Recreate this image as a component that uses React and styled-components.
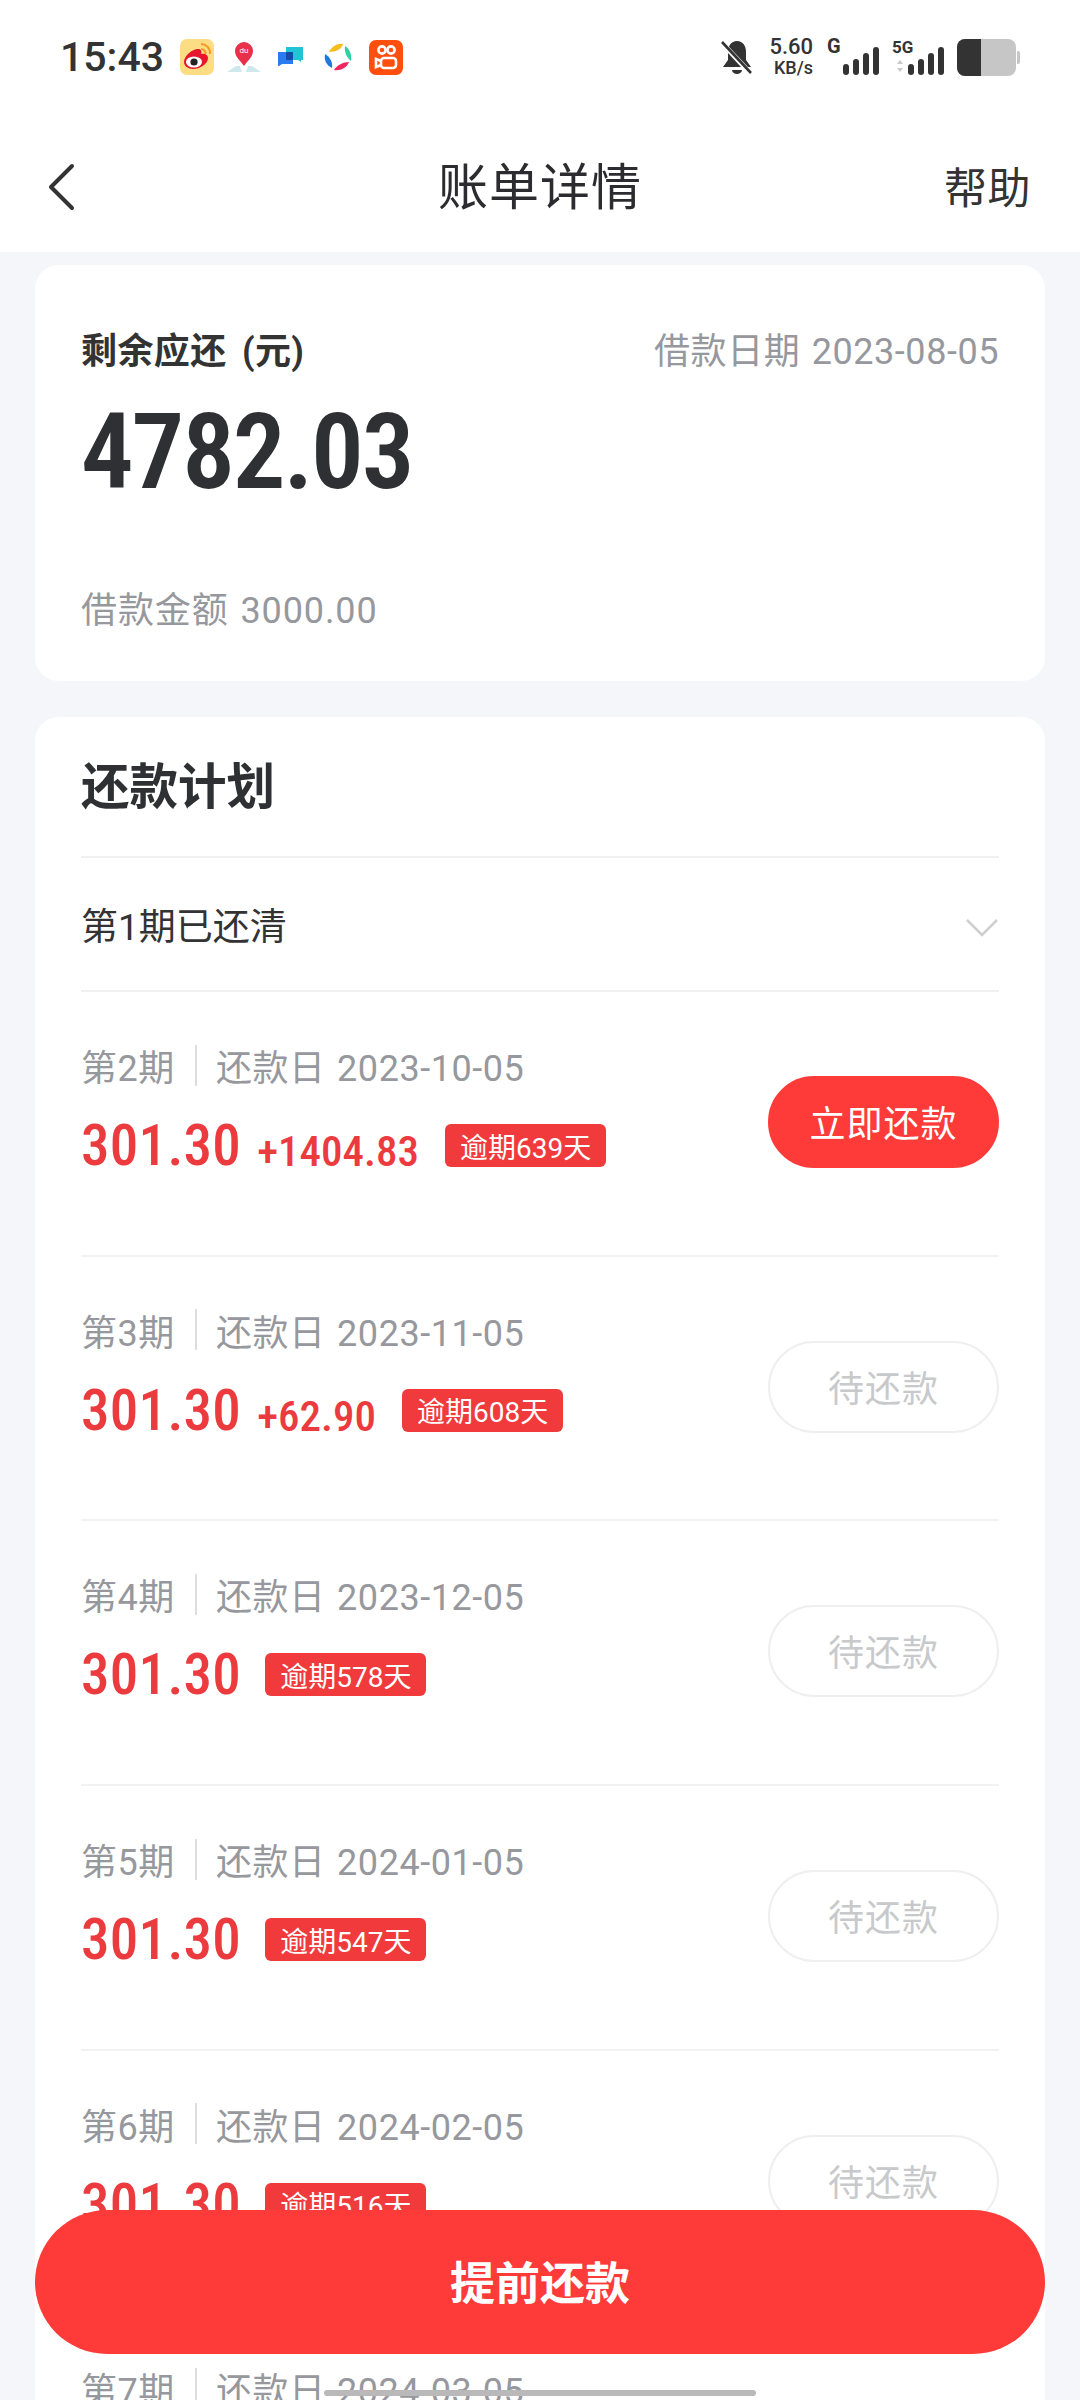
import React from "react";
import styled, { createGlobalStyle } from "styled-components";

const CJK = '"Noto Sans CJK SC", "Noto Sans", sans-serif';
const NUM = 'Roboto, "Noto Sans CJK SC", sans-serif';

const Global = createGlobalStyle`
  html, body { margin: 0; padding: 0; background: #f5f6fa; }
  * { box-sizing: border-box; }
`;

const Page = styled.div`
  position: relative;
  width: 1080px;
  height: 2400px;
  overflow: hidden;
  background: #f5f6fa;
  font-family: ${CJK};
`;

const Header = styled.header`
  background: #fff;
  height: 252px;
  display: flex;
  flex-direction: column;
`;

const StatusBar = styled.div`
  height: 114px;
  padding: 36px 60px 0 60px;
  display: flex;
  justify-content: space-between;
  align-items: flex-start;
`;

const StatusGroup = styled.div`
  display: flex;
  align-items: center;
  height: 42px;
`;

const Time = styled.span`
  font-family: Roboto, sans-serif;
  font-size: 41px;
  font-weight: 500;
  color: #333;
  line-height: 42px;
`;

const IconSlot = styled.span`
  display: inline-flex;
  margin-left: ${(p) => p.$ml}px;
`;

const Speed = styled.div`
  display: flex;
  flex-direction: column;
  align-items: flex-end;
  width: 46px;
  margin: 0 14px;
  font-family: Roboto, sans-serif;
  font-weight: 500;
  color: #333;
  line-height: 21px;
  white-space: nowrap;
`;
const SpeedTop = styled.span`font-size: 22px;`;
const SpeedBottom = styled.span`font-size: 18px;`;

const Nav = styled.nav`
  flex: 1;
  position: relative;
  display: flex;
  align-items: center;
  justify-content: center;
`;

const Back = styled.svg`
  position: absolute;
  left: 45px;
  top: 48px;
`;

const Title = styled.h1`
  margin: 0;
  font-size: 50px;
  font-weight: 400;
  color: #2c2c30;
  line-height: 60px;
  letter-spacing: 1px;
`;

const Help = styled.span`
  position: absolute;
  right: 49px;
  top: 45px;
  font-size: 43px;
  color: #333;
  line-height: 52px;
  letter-spacing: 0.5px;
`;

const Content = styled.main`
  padding: 13px 35px 0;
  display: flex;
  flex-direction: column;
  gap: 36px;
`;

const Card = styled.section`
  background: #fff;
  border-radius: 24px;
  padding: 0 46px;
`;

const SummaryCard = styled(Card)`
  height: 416px;
  padding-top: 57px;
`;

const SummaryTop = styled.div`
  display: flex;
  justify-content: space-between;
  align-items: center;
  height: 52px;
`;

const SummaryLabel = styled.span`
  font-size: 36px;
  font-weight: 700;
  color: #333;
  font-family: ${NUM};
  word-spacing: 6px;
  letter-spacing: 0.4px;
`;

const Muted = styled.span`
  font-family: ${NUM};
  font-size: 36px;
  color: #96989d;
  letter-spacing: 0.55px;
  word-spacing: 2px;
`;

const BigAmount = styled.div`
  font-family: Roboto, sans-serif;
  font-stretch: 75%;
  font-size: 105px;
  font-weight: 600;
  color: #2f3033;
  line-height: 100px;
  margin-top: 29px;
  letter-spacing: -2.2px;
`;

const LoanAmount = styled(Muted)`
  display: block;
  margin-top: 83px;
  line-height: 50px;
  letter-spacing: 0.9px;
`;

const PlanTitleRow = styled.div`
  height: 141px;
  display: flex;
  align-items: center;
  padding-bottom: 8px;
  border-bottom: 2px solid #f0f0f2;
`;

const PlanTitle = styled.h2`
  margin: 0;
  font-size: 48.5px;
  font-weight: 700;
  color: #2f3033;
`;

const PaidRow = styled.div`
  height: 134px;
  display: flex;
  align-items: center;
  justify-content: space-between;
  border-bottom: 2px solid #f0f0f2;
`;

const PaidText = styled.span`
  font-family: ${NUM};
  font-size: 37px;
  color: #333;
`;

const Chevron = styled.svg`
  margin: 6px 0 0 0;
`;

const Row = styled.div`
  height: 264.7px;
  display: flex;
  justify-content: space-between;
  border-bottom: 2px solid #f2f2f4;
  flex-shrink: 0;
`;

const RowInfo = styled.div`
  padding-top: 47px;
`;

const Meta = styled.div`
  display: flex;
  align-items: center;
  height: 52px;
`;

const MetaSep = styled.i`
  width: 2px;
  height: 41px;
  margin: 0 19px 0 20px;
  background: #dcdde0;
`;

const AmountLine = styled.div`
  display: flex;
  align-items: flex-end;
  margin-top: 22px;
  height: 60px;
  color: #ec3b3f;
  font-family: Roboto, sans-serif;
  font-stretch: 75%;
`;

const Amount = styled.span`
  font-size: 57px;
  font-weight: 500;
  line-height: 60px;
  position: relative;
  top: 3px;
  letter-spacing: 0.3px;
`;

const Extra = styled.span`
  font-size: 43px;
  font-weight: 500;
  margin-left: 16px;
  line-height: 52px;
  position: relative;
  top: 4px;
`;

const Tag = styled.span`
  margin-left: ${(p) => (p.$afterExtra ? 26 : 24)}px;
  margin-bottom: 6px;
  height: 43px;
  padding: 0 15px;
  display: inline-flex;
  align-items: center;
  background: #f03a3c;
  color: #fff;
  font-family: ${NUM};
  font-stretch: 100%;
  font-size: 28px;
  border-radius: 6px;
`;

const PayButton = styled.div`
  margin-top: 84px;
  width: 231px;
  height: 92px;
  border-radius: 46px;
  display: flex;
  align-items: center;
  justify-content: center;
  padding-bottom: 2px;
  font-size: 36px;
  letter-spacing: 1px;
  background: ${(p) => (p.$active ? "#ff3b3a" : "#fff")};
  color: ${(p) => (p.$active ? "#fff" : "#c8c9cb")};
  border: 2px solid ${(p) => (p.$active ? "#ff3b3a" : "#efeff1")};
`;

const PrepayButton = styled.div`
  position: absolute;
  left: 35px;
  right: 35px;
  top: 2210px;
  height: 144px;
  border-radius: 72px;
  background: #ff3b3a;
  color: #fff;
  font-size: 45px;
  font-weight: 700;
  padding-bottom: 4px;
  display: flex;
  align-items: center;
  justify-content: center;
`;

const HomeBar = styled.div`
  position: absolute;
  left: 324px;
  top: 2390px;
  width: 432px;
  height: 6px;
  border-radius: 3px;
  background: #b9b9b9;
`;

const Weibo = () => (
  <svg width="34" height="36" viewBox="0 0 34 36">
    <rect width="34" height="36" rx="7" fill="#fddd84" />
    <path d="M4 23c0-6 8-13 14-13 3 0 4 2 3 5 4-1 7 1 7 4 0 6-8 11-15 11-5 0-9-3-9-7z" fill="#e6162d" />
    <ellipse cx="14" cy="23" rx="8" ry="5.5" fill="#fff" />
    <circle cx="14" cy="23" r="3.6" fill="#222" />
    <path d="M21 5a9 9 0 0 1 9 10M21 10a4.5 4.5 0 0 1 4.5 5" stroke="#f59e2c" strokeWidth="2.2" fill="none" />
  </svg>
);
const Pin = () => (
  <svg width="36" height="32" viewBox="0 0 36 32">
    <path d="M1 31l9-6h4l2 6zM35 31l-9-6h-4l-2 6z" fill="#cfe8ee" />
    <path d="M18 25c-4-6-9-9-9-15a9 9 0 0 1 18 0c0 6-5 9-9 15z" fill="#e8304a" />
    <text x="18" y="12" textAnchor="middle" fontFamily="Roboto, sans-serif" fontSize="8" fill="#fff">du</text>
  </svg>
);
const Chat = () => (
  <svg width="25" height="20" viewBox="0 0 25 20">
    <path d="M8 0h17v13h-2v2l-3-2H8z" fill="#22c3d6" />
    <path d="M0 5h15v12H4l-3 2H0z" fill="#2a7bf0" />
    <rect x="8" y="5" width="7" height="8" rx="1" fill="#124ba8" />
  </svg>
);
const Pinwheel = () => (
  <svg width="28" height="28" viewBox="0 0 28 28">
    <path d="M5 9C8 3 14 0 19 1c-1 5-7 8-14 8z" fill="#f5bd1f" />
    <path d="M21 3c5 3 7 9 6 15-4-3-7-9-6-15z" fill="#2ecfa3" />
    <path d="M25 19c-2 6-9 9-15 8 3-5 9-8 15-8z" fill="#f0265f" />
    <path d="M1 11c-1 6 1 11 7 14 1-6-2-11-7-14z" fill="#1f78e0" />
  </svg>
);
const Kuaishou = () => (
  <svg width="34" height="35" viewBox="0 0 34 35">
    <rect width="34" height="35" rx="7" fill="#fe4f0c" />
    <g fill="none" stroke="#fff" strokeWidth="2.6">
      <circle cx="13" cy="10" r="3.6" />
      <circle cx="22" cy="10" r="3.6" />
      <rect x="12" y="18" width="15" height="10" rx="3" />
      <path d="M12 21l-5-2v8l5-2" />
    </g>
  </svg>
);
const Bell = () => (
  <svg width="32" height="36" viewBox="0 0 32 36">
    <path d="M16 2c6 0 9 5 9 11v8l5 7H2l5-7v-8c0-6 3-11 9-11z" fill="#333" />
    <path d="M11 31h10a5 4 0 0 1-10 0z" fill="#333" />
    <path d="M1 4l29 31" stroke="#fff" strokeWidth="5" />
    <path d="M1 3l29 31" stroke="#333" strokeWidth="2.6" />
  </svg>
);
const Signal = ({ label, arrows }) => (
  <svg width="56" height="38" viewBox="0 0 56 38">
    <text x="0" y="15" fontFamily="Roboto, sans-serif" fontWeight="700" fontSize={label === "G" ? 20 : 17} fill="#333">{label}</text>
    {arrows && <path d="M5 26l3-4 3 4zM5 30l3 4 3-4z" fill="#c9c9c9" />}
    <rect x="16" y="26" width="6" height="11" rx="3" fill="#333" />
    <rect x="26" y="21" width="6" height="16" rx="3" fill="#333" />
    <rect x="36" y="15" width="6" height="22" rx="3" fill="#333" />
    <rect x="46" y="9" width="6" height="28" rx="3" fill="#333" />
  </svg>
);
const Battery = () => (
  <svg width="63" height="37" viewBox="0 0 63 37">
    <rect width="59" height="37" rx="8" fill="#c6c6c6" />
    <path d="M8 0h16v37H8a8 8 0 0 1-8-8V8a8 8 0 0 1 8-8z" fill="#333" />
    <path d="M60 12h1a2 2 0 0 1 2 2v9a2 2 0 0 1-2 2h-1z" fill="#c6c6c6" />
  </svg>
);

const rows = [
  { n: 2, date: "2023-10-05", extra: "+1404.83", days: 639, active: true },
  { n: 3, date: "2023-11-05", extra: "+62.90", days: 608 },
  { n: 4, date: "2023-12-05", days: 578 },
  { n: 5, date: "2024-01-05", days: 547 },
  { n: 6, date: "2024-02-05", days: 516 },
];

export default function App() {
  return (
    <Page>
      <Global />
      <Header>
        <StatusBar>
          <StatusGroup>
            <Time>15:43</Time>
            <IconSlot $ml={16}><Weibo /></IconSlot>
            <IconSlot $ml={12}><Pin /></IconSlot>
            <IconSlot $ml={16}><Chat /></IconSlot>
            <IconSlot $ml={21}><Pinwheel /></IconSlot>
            <IconSlot $ml={17}><Kuaishou /></IconSlot>
          </StatusGroup>
          <StatusGroup>
            <Bell />
            <Speed>
              <SpeedTop>5.60</SpeedTop>
              <SpeedBottom>KB/s</SpeedBottom>
            </Speed>
            <Signal label="G" />
            <IconSlot $ml={9}><Signal label="5G" arrows /></IconSlot>
            <IconSlot $ml={9}><Battery /></IconSlot>
          </StatusGroup>
        </StatusBar>
        <Nav>
          <Back width="32" height="50" viewBox="0 0 32 50" fill="none">
            <path d="M27 4L6 25l21 21" stroke="#333" strokeWidth="4" strokeLinecap="round" strokeLinejoin="round" />
          </Back>
          <Title>账单详情</Title>
          <Help>帮助</Help>
        </Nav>
      </Header>
      <Content>
        <SummaryCard>
          <SummaryTop>
            <SummaryLabel>剩余应还 (元)</SummaryLabel>
            <Muted>借款日期 2023-08-05</Muted>
          </SummaryTop>
          <BigAmount>4782.03</BigAmount>
          <LoanAmount>借款金额 3000.00</LoanAmount>
        </SummaryCard>
        <Card>
          <PlanTitleRow>
            <PlanTitle>还款计划</PlanTitle>
          </PlanTitleRow>
          <PaidRow>
            <PaidText>第1期已还清</PaidText>
            <Chevron width="34" height="20" viewBox="0 0 34 20" fill="none">
              <path d="M2 3l15 15L32 3" stroke="#cfcfd1" strokeWidth="2.5" />
            </Chevron>
          </PaidRow>
          {rows.map((r) => (
            <Row key={r.n}>
              <RowInfo>
                <Meta>
                  <Muted>第{r.n}期</Muted>
                  <MetaSep />
                  <Muted>还款日 {r.date}</Muted>
                </Meta>
                <AmountLine>
                  <Amount>301.30</Amount>
                  {r.extra && <Extra>{r.extra}</Extra>}
                  <Tag $afterExtra={!!r.extra}>逾期{r.days}天</Tag>
                </AmountLine>
              </RowInfo>
              <PayButton $active={r.active}>{r.active ? "立即还款" : "待还款"}</PayButton>
            </Row>
          ))}
          <Row>
            <RowInfo>
              <Meta>
                <Muted>第7期</Muted>
                <MetaSep />
                <Muted>还款日 2024-03-05</Muted>
              </Meta>
            </RowInfo>
          </Row>
        </Card>
      </Content>
      <PrepayButton>提前还款</PrepayButton>
      <HomeBar />
    </Page>
  );
}
